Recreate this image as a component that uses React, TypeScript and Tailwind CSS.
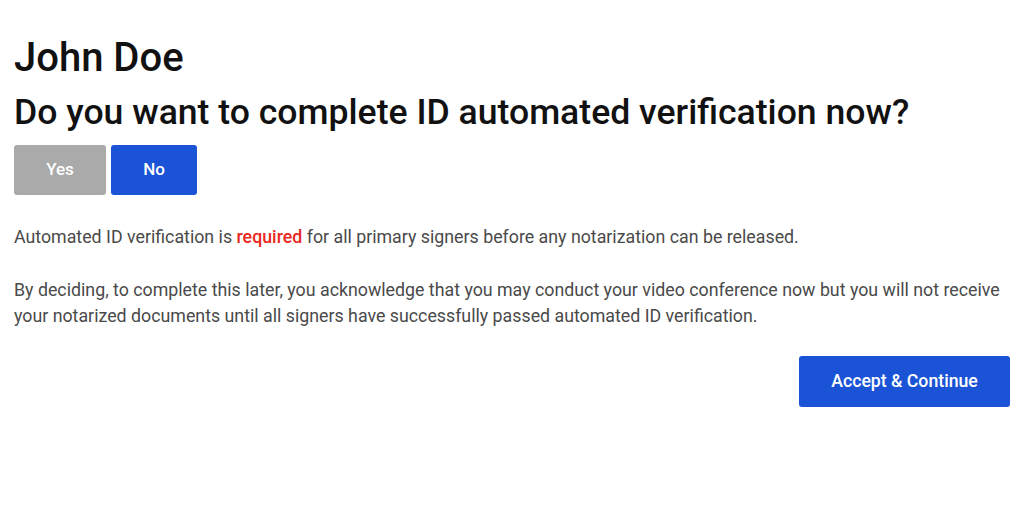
export default function App() {
  return (
    <div className="min-h-screen bg-white px-[14px] pt-[34px] font-['Roboto',sans-serif]">
      <h1 className="text-[40px] font-medium leading-[48px] text-[#111]">John Doe</h1>
      <h2 className="mt-[9px] text-[35.6px] font-medium leading-[42px] text-[#111]">
        Do you want to complete ID automated verification now?
      </h2>
      <div className="mt-[12px] flex gap-[5px]">
        <button className="h-[50px] w-[92px] rounded-[3px] bg-[#aaaaaa] text-[17px] font-medium text-white">
          Yes
        </button>
        <button className="h-[50px] w-[86px] rounded-[3px] bg-[#1a53d6] text-[17px] font-medium text-white">
          No
        </button>
      </div>
      <p className="mt-[29px] text-[17.8px] leading-[26px] text-[#4a4a4a]">
        Automated ID verification is <span className="font-medium text-[#e8281e]">required</span> for all primary
        signers before any notarization can be released.
      </p>
      <p className="mt-[27px] text-[17.8px] leading-[26px] text-[#4a4a4a]">
        By deciding, to complete this later, you acknowledge that you may conduct your video conference now but you
        will not receive your notarized documents until all signers have successfully passed automated ID verification.
      </p>
      <div className="mt-[27px] flex justify-end">
        <button className="h-[51px] w-[211px] rounded-[3px] bg-[#1a53d6] text-[17.7px] font-medium text-white">
          Accept &amp; Continue
        </button>
      </div>
    </div>
  );
}
